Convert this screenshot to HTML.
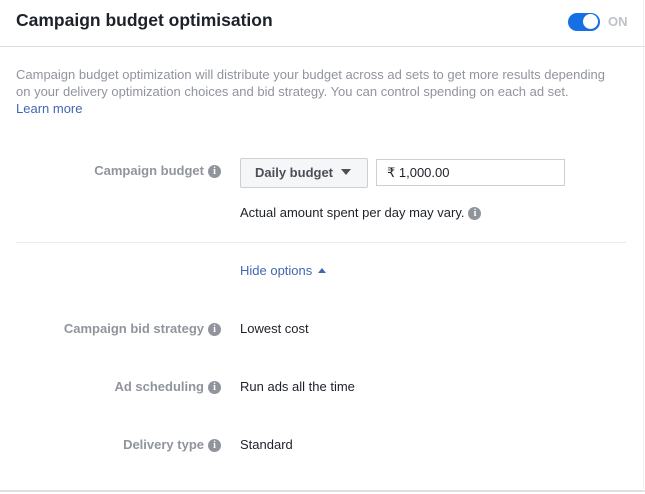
<!DOCTYPE html>
<html><head><style>
body{margin:0;width:645px;height:494px;background:#fff;font-family:"Liberation Sans",Arial,sans-serif;position:relative;overflow:hidden}
.a{position:absolute;white-space:nowrap}
.lbl{color:#90949c;font-weight:bold;font-size:13px;text-align:right;right:424px}
.val{color:#1d2129;font-size:13px;left:240px}
.i{display:inline-block;width:13px;height:13px;border-radius:50%;background:#90949c;color:#fff;font-size:10px;line-height:13px;text-align:center;font-weight:bold;font-family:"Liberation Serif",serif;vertical-align:1px;margin-left:4px}
</style></head><body>
<div class="a" style="left:16px;top:10px;font-size:17.5px;font-weight:bold;color:#1d2129">Campaign budget optimisation</div>
<div class="a" style="left:568px;top:13px;width:32px;height:18px;border-radius:9px;background:#166fe5"></div>
<div class="a" style="left:583px;top:14px;width:15px;height:15px;border-radius:50%;background:#fff"></div>
<div class="a" style="left:608px;top:14px;font-size:13px;font-weight:bold;color:#bec3c9">ON</div>
<div class="a" style="left:0;top:46px;width:645px;height:1px;background:#dddfe2"></div>
<div class="a" style="left:16px;top:66px;font-size:13px;line-height:17px;color:#90949c;white-space:normal;width:602px">Campaign budget optimization will distribute your budget across ad sets to get more results depending on your delivery optimization choices and bid strategy. You can control spending on each ad set.<br><span style="color:#4267b2">Learn more</span></div>
<div class="a lbl" style="top:163px">Campaign budget<span class="i">i</span></div>
<div class="a" style="left:240px;top:158px;width:126px;height:28px;border:1px solid #ccd0d5;background:#f5f6f7;border-radius:2px;font-size:13px;font-weight:bold;color:#4b4f56;line-height:28px;text-indent:14px">Daily budget <span style="display:inline-block;width:0;height:0;border-left:5px solid transparent;border-right:5px solid transparent;border-top:6px solid #4b4f56;margin-left:4px;vertical-align:2px"></span></div>
<div class="a" style="left:376px;top:159px;width:187px;height:25px;border:1px solid #ccd0d5;font-size:13px;color:#1d2129;line-height:25px;text-indent:10px">₹ 1,000.00</div>
<div class="a val" style="top:205px">Actual amount spent per day may vary.<span class="i">i</span></div>
<div class="a" style="left:16px;top:242px;width:610px;height:1px;background:#e9ebee"></div>
<div class="a" style="left:240px;top:263px;font-size:13px;color:#4267b2">Hide options <span style="display:inline-block;width:0;height:0;border-left:4px solid transparent;border-right:4px solid transparent;border-bottom:5px solid #4267b2;vertical-align:2px;margin-left:2px"></span></div>
<div class="a lbl" style="top:321px">Campaign bid strategy<span class="i">i</span></div>
<div class="a val" style="top:321px">Lowest cost</div>
<div class="a lbl" style="top:379px">Ad scheduling<span class="i">i</span></div>
<div class="a val" style="top:379px">Run ads all the time</div>
<div class="a lbl" style="top:437px">Delivery type<span class="i">i</span></div>
<div class="a val" style="top:437px">Standard</div>
<div class="a" style="left:0;top:490px;width:645px;height:2px;background:#dddfe2"></div>
<div class="a" style="left:643px;top:0;width:1px;height:492px;background:#f0f0f0"></div>
</body></html>
